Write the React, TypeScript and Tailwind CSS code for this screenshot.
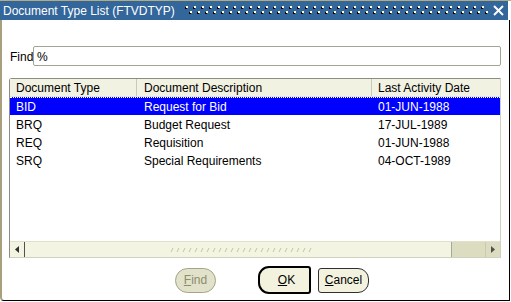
import React from "react";

const rows = [
  { code: "BID", desc: "Request for Bid", date: "01-JUN-1988" },
  { code: "BRQ", desc: "Budget Request", date: "17-JUL-1989" },
  { code: "REQ", desc: "Requisition", date: "01-JUN-1988" },
  { code: "SRQ", desc: "Special Requirements", date: "04-OCT-1989" },
];

function TitleDots() {
  const xs = Array.from({ length: 38 }, (_, i) => i * 8);
  return (
    <svg width="304" height="12" className="block" shapeRendering="crispEdges">
      {xs.map((x) => (
        <g key={x}>
          <rect x={x + 1} y="1" width="2" height="2" fill="#ffffcc" />
          <rect x={x} y="2" width="1" height="2" fill="#000000" />
          <rect x={x + 1} y="3" width="1" height="1" fill="#000000" />
          <rect x={x + 5} y="6" width="2" height="2" fill="#ffffcc" />
          <rect x={x + 4} y="7" width="1" height="2" fill="#000000" />
          <rect x={x + 5} y="8" width="1" height="1" fill="#000000" />
        </g>
      ))}
    </svg>
  );
}

function Grip() {
  const xs = Array.from({ length: 24 }, (_, i) => i * 6);
  return (
    <svg width="142" height="8" className="block">
      {xs.map((x) => (
        <line key={x} x1={x + 1} y1="6" x2={x + 3} y2="2" stroke="#c4c4a4" strokeWidth="1" />
      ))}
    </svg>
  );
}

export default function App() {
  return (
    <div className="w-[511px] h-[302px] bg-white flex flex-col pb-px font-['Liberation_Sans',Arial,sans-serif] text-[12px] text-black border-t border-[#b4ac80]">
      {/* Title bar */}
      <div className="h-[19px] mr-[3px] bg-[#33669a] flex items-center text-white pl-[3px] shrink-0">
        <span className="leading-none">Document Type List (FTVDTYP)</span>
        <div className="ml-[10px]">
          <TitleDots />
        </div>
        <svg width="11" height="11" className="ml-[4px]">
          <line x1="1" y1="1" x2="10" y2="10" stroke="white" strokeWidth="2" />
          <line x1="10" y1="1" x2="1" y2="10" stroke="white" strokeWidth="2" />
        </svg>
      </div>

      {/* Body */}
      <div className="flex-1 flex flex-col border-l-2 border-[#a8a07c] border-b border-r border-r-black border-b-black rounded-bl-[4px] mr-px">
        {/* Find */}
        <div className="flex items-center mt-[26px] pl-[8px]">
          <span className="w-[23px] pt-[2px]">Find</span>
          <div className="w-[468px] h-[20px] border border-[#a4a494] rounded-[2px] flex items-center pl-[3px] pt-px">
            %
          </div>
        </div>

        {/* List */}
        <div className="mt-[12px] ml-[7px] w-[492px] h-[180px] flex flex-col border border-[#8c8c84] border-r-[#d0d0c0] border-b-[#d0d0c0] rounded-tl-[3px]">
          <div className="h-[18px] bg-[#f2f2e2] flex items-center border-b border-[#e4e4d4]">
            <div className="w-[127px] pl-[6px] pt-px h-full flex items-center border-r border-[#c8c8b8]">Document Type</div>
            <div className="w-[235px] pl-[7px] pt-px h-full flex items-center border-r border-[#c8c8b8]">Document Description</div>
            <div className="flex-1 pl-[6px] pt-px h-full flex items-center">Last Activity Date</div>
          </div>
          {rows.map((r, i) => (
            <div
              key={r.code}
              className={
                i === 0
                  ? "h-[18px] flex items-center pt-px bg-[#0000ff] text-white border-t border-dotted border-white"
                  : "h-[18px] flex items-center pt-[2px]"
              }
            >
              <div className="w-[127px] pl-[6px]">{r.code}</div>
              <div className="w-[235px] pl-[7px]">{r.desc}</div>
              <div className="flex-1 pl-[6px]">{r.date}</div>
            </div>
          ))}
          <div className="flex-1" />
          {/* Scrollbar */}
          <div className="h-[16px] flex bg-[#f4f4e2] border-t border-[#e0e0cc]">
            <div className="w-[14px] flex items-center justify-center">
              <svg width="4" height="7">
                <polygon points="4,0 0,3.5 4,7" fill="#303030" />
              </svg>
            </div>
            <div className="w-[428px] flex items-center border-l border-[#505050] border-r border-r-[#a8a898] pl-[145px]">
              <Grip />
            </div>
            <div className="w-[33px] bg-[#dcdcc0]" />
            <div className="flex-1 bg-[#dcdcc0] flex items-center justify-center border-l border-[#cacab0]">
              <svg width="4" height="7">
                <polygon points="0,0 4,3.5 0,7" fill="#505050" />
              </svg>
            </div>
          </div>
        </div>

        {/* Buttons */}
        <div className="flex items-center mt-[8px] h-[28px]">
          <button className="ml-[173px] w-[41px] h-[25px] rounded-full bg-[#e2e2ca] border border-[#a4a488] text-[#8c8c6c]">
            <span className="underline">F</span>ind
          </button>
          <button className="ml-[42px] w-[53px] h-[28px] rounded-l-[11px] rounded-r-[3px] bg-[#f2f2de] border-2 border-black pl-[4px]">
            <span className="underline">O</span>K
          </button>
          <button className="ml-[7px] w-[51px] h-[25px] rounded-l-[3px] rounded-r-[11px] bg-[#f2f2de] border border-[#303030]">
            <span className="underline">C</span>ancel
          </button>
        </div>
      </div>
    </div>
  );
}
